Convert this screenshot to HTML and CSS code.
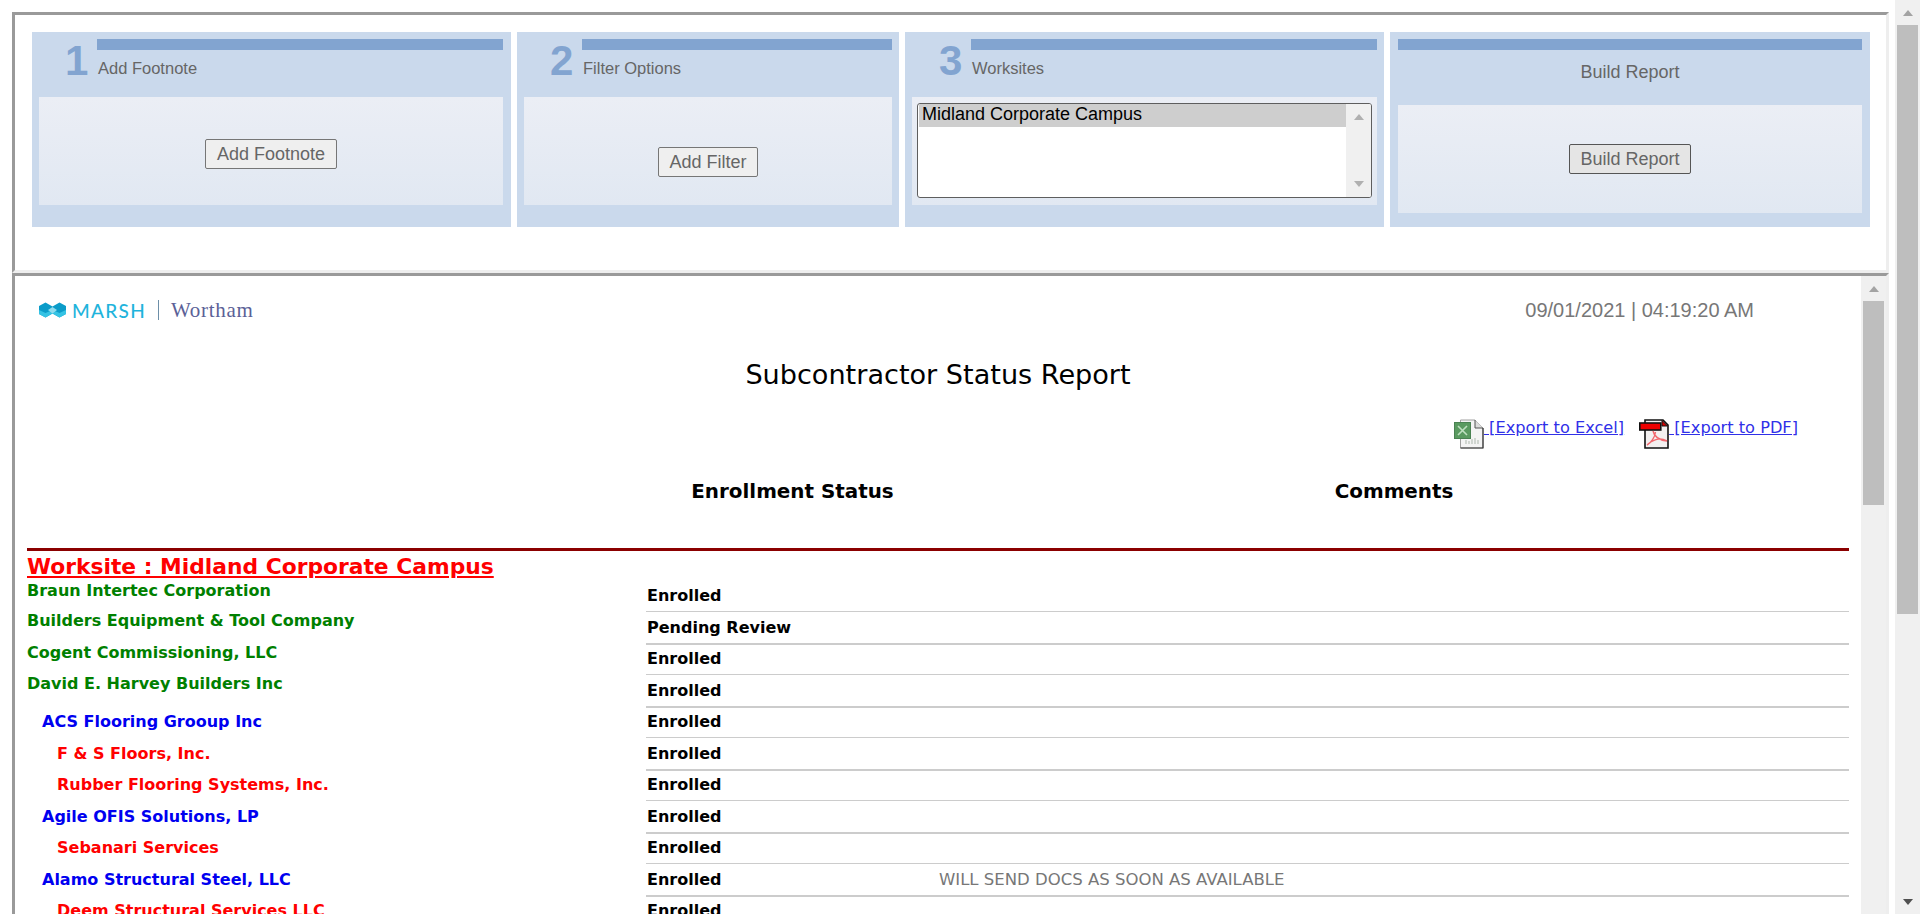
FILE: index.html
```html
<!DOCTYPE html>
<html lang="en">
<head>
<meta charset="utf-8">
<title>Subcontractor Status Report</title>
<link rel="stylesheet" href="styles.css">
</head>
<body>
<div class="page">
  <div class="frames">
    <section class="frame frame-top">
      <div class="panels">
        <div class="panel panel-first">
          <div class="panel-head">
            <div class="step">1</div>
            <div class="head-main"><div class="bar"></div><div class="label">Add Footnote</div></div>
          </div>
          <div class="box box-footnote"><button class="btn" type="button">Add Footnote</button></div>
        </div>
        <div class="panel">
          <div class="panel-head">
            <div class="step">2</div>
            <div class="head-main"><div class="bar"></div><div class="label">Filter Options</div></div>
          </div>
          <div class="box box-filter"><button class="btn" type="button">Add Filter</button></div>
        </div>
        <div class="panel">
          <div class="panel-head">
            <div class="step step-wide">3</div>
            <div class="head-main"><div class="bar"></div><div class="label">Worksites</div></div>
          </div>
          <div class="box box-list">
            <div class="listbox">
              <div class="list-items"><div class="list-option">Midland Corporate Campus</div></div>
              <div class="list-scroll"><span class="tri tri-up tri-light"></span><span class="tri tri-down tri-light"></span></div>
            </div>
          </div>
        </div>
        <div class="panel panel-build">
          <div class="bar"></div>
          <div class="build-title">Build Report</div>
          <div class="box"><button class="btn btn-active" type="button">Build Report</button></div>
        </div>
      </div>
    </section>
    <section class="frame frame-report">
      <div class="report">
        <div class="brand-row">
          <div class="logo">
            <svg class="logo-mark" width="27" height="16" viewBox="0 0 27 16">
              <polygon fill="#0b9cc9" points="0,4 6.5,0.5 13.5,4.500 20.5,0.5 27,4 27,12 20.5,15.500 13.5,11.500 6.5,15.500 0,12"/>
              <polygon fill="#35c3e4" points="0,8 6.5,11 13.5,8 20.5,11 27,8 27,12 20.5,15.500 13.5,11.500 6.5,15.500 0,12"/>
              <polygon fill="#8fdcee" points="9,8 13.5,5 18,8 13.5,11.500"/>
            </svg>
            <span class="logo-marsh">MARSH</span>
            <span class="logo-divider"></span>
            <span class="logo-wortham">Wortham</span>
          </div>
          <div class="stamp">09/01/2021 | 04:19:20 AM</div>
        </div>
        <h1 class="title">Subcontractor Status Report</h1>
        <div class="exports">
          <a class="export" href="#">
            <svg width="30" height="30" viewBox="0 0 30 30">
              <path d="M6.5 1H21l8 8v20H6.5z" fill="#f4f4f4" stroke="#a0a0a0"/>
              <path d="M21 1v8h8" fill="#dcdcdc" stroke="#555"/>
              <path d="M6.500 29H29V9" fill="none" stroke="#333" stroke-width="1.2"/>
              <path d="M12 25v-4M15 25v-3M18 25v-5M21 25v-6M24 25v-4" stroke="#c8cfc8" stroke-width="1.6"/>
              <rect x="0.5" y="3.5" width="16" height="16" fill="#5a9a60" stroke="#4a8252"/>
              <path d="M4 7l9 9M13 7l-9 9" stroke="#bfe0c0" stroke-width="1.6"/>
            </svg><span class="export-text"> [Export to Excel]</span>
          </a>
          <a class="export" href="#">
            <svg width="30" height="30" viewBox="0 0 30 30">
              <path d="M6 1H24l5 5v23H6z" fill="#f3f0f0" stroke="#111" stroke-width="1.6"/>
              <path d="M23 1.5l5.500 5.500h-5.500z" fill="#e00000" stroke="#111"/>
              <rect x="0.8" y="4" width="21" height="7" fill="#ee0000" stroke="#111" stroke-width="1.6"/>
              <path d="M8 26c4-2 8-8 8.500-13M28 22c-6-3-11-3-19 3M14 12c1 5 6 9 14 10" fill="none" stroke="#f2686e" stroke-width="1.4"/>
            </svg><span class="export-text"> [Export to PDF]</span>
          </a>
        </div>
        <div class="columns">
          <div></div>
          <div class="col-title">Enrollment Status</div>
          <div class="col-title">Comments</div>
        </div>
        <div class="rule"></div>
        <h2 class="worksite">Worksite : Midland Corporate Campus</h2>
        <div class="rows">
          <div class="row row-first"><div class="name lvl-0">Braun Intertec Corporation</div><div class="status">Enrolled</div><div class="comment"></div></div>
          <div class="row row-raised"><div class="name lvl-0">Builders Equipment &amp; Tool Company</div><div class="status">Pending Review</div><div class="comment"></div></div>
          <div class="row row-raised"><div class="name lvl-0">Cogent Commissioning, LLC</div><div class="status">Enrolled</div><div class="comment"></div></div>
          <div class="row row-raised"><div class="name lvl-0">David E. Harvey Builders Inc</div><div class="status">Enrolled</div><div class="comment"></div></div>
          <div class="row"><div class="name lvl-1">ACS Flooring Grooup Inc</div><div class="status">Enrolled</div><div class="comment"></div></div>
          <div class="row"><div class="name lvl-2">F &amp; S Floors, Inc.</div><div class="status">Enrolled</div><div class="comment"></div></div>
          <div class="row"><div class="name lvl-2">Rubber Flooring Systems, Inc.</div><div class="status">Enrolled</div><div class="comment"></div></div>
          <div class="row"><div class="name lvl-1">Agile OFIS Solutions, LP</div><div class="status">Enrolled</div><div class="comment"></div></div>
          <div class="row"><div class="name lvl-2">Sebanari Services</div><div class="status">Enrolled</div><div class="comment"></div></div>
          <div class="row"><div class="name lvl-1">Alamo Structural Steel, LLC</div><div class="status">Enrolled</div><div class="comment">WILL SEND DOCS AS SOON AS AVAILABLE</div></div>
          <div class="row"><div class="name lvl-2">Deem Structural Services LLC</div><div class="status">Enrolled</div><div class="comment"></div></div>
        </div>
      </div>
      <div class="vscroll vscroll-inner">
        <div class="vscroll-btn"><span class="tri tri-up"></span></div>
        <div class="thumb thumb-inner"></div>
      </div>
    </section>
  </div>
  <div class="vscroll vscroll-outer">
    <div class="vscroll-btn"><span class="tri tri-up"></span></div>
    <div class="thumb thumb-outer"></div>
    <div class="vscroll-btn vscroll-end"><span class="tri tri-down tri-dark"></span></div>
  </div>
</div>
</body>
</html>
```

FILE: styles.css
```css
* { box-sizing: border-box; }
html, body { margin: 0; padding: 0; background: #fff; }
.page { display: flex; width: 1920px; height: 914px; overflow: hidden; }
.frames { width: 1895px; flex: none; padding: 12px 6px 0 12px; }
.frame {
  border-style: solid;
  border-width: 3px;
  border-color: #9a9a9a #eeeeee #eeeeee #9a9a9a;
}
.frame-top { height: 261px; padding: 17px 0 0 17px; }
.frame-report { display: flex; height: 800px; }

.panels {
  display: grid;
  grid-template-columns: 479px 382px 479px 480px;
  column-gap: 6px;
  font-family: "Liberation Sans", Arial, sans-serif;
}
.panel { height: 195px; background: #cad9ec; padding: 7px 7px 0; }
.panel-first { padding-right: 8px; }
.panel-head { display: flex; height: 58px; }
.step {
  flex: none;
  width: 58px;
  padding: 1px 0 0 26px;
  font-size: 42px;
  line-height: 42px;
  font-weight: 700;
  color: #82a4d0;
}
.step-wide { width: 59px; padding-left: 27px; }
.head-main { flex: 1; min-width: 0; }
.bar { height: 11px; background: #82a4d0; }
.label { margin-top: 8px; padding-left: 1px; font-size: 16.5px; line-height: 20px; color: #666; }
.box {
  display: flex;
  align-items: center;
  justify-content: center;
  height: 108px;
  background: linear-gradient(#ebeef5, #e1e8f2);
}
.box-footnote { padding-top: 6px; }
.box-filter { padding-top: 22px; }
.box-list { align-items: flex-start; justify-content: flex-start; padding: 6px 5px 0 5px; }
.btn {
  height: 30px;
  padding: 0 10.5px;
  font-family: inherit;
  font-size: 18px;
  color: #666;
  background: #efefef;
  border: 1px solid #767676;
  border-radius: 2px;
}
.btn-active { background: #e5e5e5; border-color: #555; }

.listbox {
  display: flex;
  width: 455px;
  height: 95px;
  background: #fff;
  border: 1px solid #5e5e5e;
  border-radius: 3px;
  overflow: hidden;
}
.list-items { flex: 1; padding: 0 0 0 1px; }
.list-option { height: 23px; padding: 0 3px 2px; font-size: 18px; line-height: 21px; color: #000; background: #cecece; }
.list-scroll {
  display: flex;
  flex: none;
  flex-direction: column;
  align-items: center;
  justify-content: space-between;
  width: 25px;
  padding: 10px 0;
  background: #f0f0f0;
}

.panel-build { padding-left: 8px; padding-right: 8px; }
.build-title { height: 55px; padding-top: 11px; font-size: 18px; line-height: 22px; text-align: center; color: #666; }

.tri { display: block; width: 0; height: 0; border-style: solid; border-color: transparent; }
.tri-up { border-width: 0 5.5px 6px; border-bottom-color: #a3a3a3; }
.tri-down { border-width: 6px 5.5px 0; border-top-color: #a3a3a3; }
.tri-up.tri-light { border-bottom-color: #b0b0b0; }
.tri-down.tri-light { border-top-color: #b0b0b0; }
.tri-down.tri-dark { border-top-color: #505050; }

.vscroll { display: flex; flex: none; flex-direction: column; width: 25px; background: #f0f0f0; }
.vscroll-btn { display: flex; align-items: center; justify-content: center; flex: none; height: 25px; }
.vscroll-end { margin-top: auto; }
.thumb { flex: none; margin: 0 2px; background: #bebebe; }
.thumb-inner { height: 204px; }
.thumb-outer { height: 589px; }

.report {
  flex: 1;
  min-width: 0;
  padding: 0 12px 0 12px;
  font-family: "DejaVu Sans", Verdana, sans-serif;
}
.brand-row { display: flex; align-items: center; justify-content: space-between; height: 68px; padding: 0 95px 0 12px; }
.logo { display: flex; align-items: center; height: 22px; }
.logo-mark { flex: none; }
.logo-marsh {
  margin-left: 6px;
  font-family: Lato, "Liberation Sans", sans-serif;
  font-size: 19px;
  font-weight: 500;
  letter-spacing: 1.3px;
  color: #1fb4dc;
}
.logo-divider { width: 1px; height: 20px; margin: 0 12px; background: #6d8fa8; }
.logo-wortham { font-family: "Liberation Serif", serif; font-size: 21px; letter-spacing: .7px; color: #5b6197; }
.stamp { font-family: "Liberation Sans", Arial, sans-serif; font-size: 20px; color: #777; }
.title { height: 62px; margin: 0; font-size: 27.1px; font-weight: 400; line-height: 62px; text-align: center; color: #000; }
.exports { display: flex; justify-content: flex-end; gap: 15px; height: 44px; padding: 13px 51px 0 0; }
.export { display: flex; align-items: flex-start; height: 30px; font-size: 16.2px; color: #3030e8; }
.export svg { flex: none; }
.export-text { white-space: pre; line-height: 18px; }
.columns { display: grid; grid-template-columns: 619px 293px 1fr; height: 98px; padding-top: 28px; }
.col-title { font-size: 19.9px; font-weight: 700; line-height: 27px; text-align: center; color: #000; }
.rule { height: 3px; background: #8b0000; }
.worksite {
  height: 30px;
  margin: 0;
  font-size: 21.8px;
  font-weight: 700;
  line-height: 31px;
  color: #f00;
  text-decoration: underline;
}
.row { display: grid; grid-template-columns: 619px 293px 1fr; height: 31px; font-size: 16px; line-height: 30px; }
.row:nth-child(even) { height: 32px; line-height: 31px; }
.status, .comment { border-bottom: 1px solid #ccc; }
.row:nth-child(even) .status, .row:nth-child(even) .comment { border-bottom-width: 2px; }
.status { padding-left: 1px; font-weight: 700; color: #000; }
.comment { font-size: 16.5px; color: #777; }
.name { font-weight: 700; }
.row.row-first .name { line-height: 20px; }
.row.row-raised .name { line-height: 18px; }
.lvl-0 { color: #008000; }
.lvl-1 { padding-left: 15px; color: #0000f0; }
.lvl-2 { padding-left: 30px; color: #f00; }
```
